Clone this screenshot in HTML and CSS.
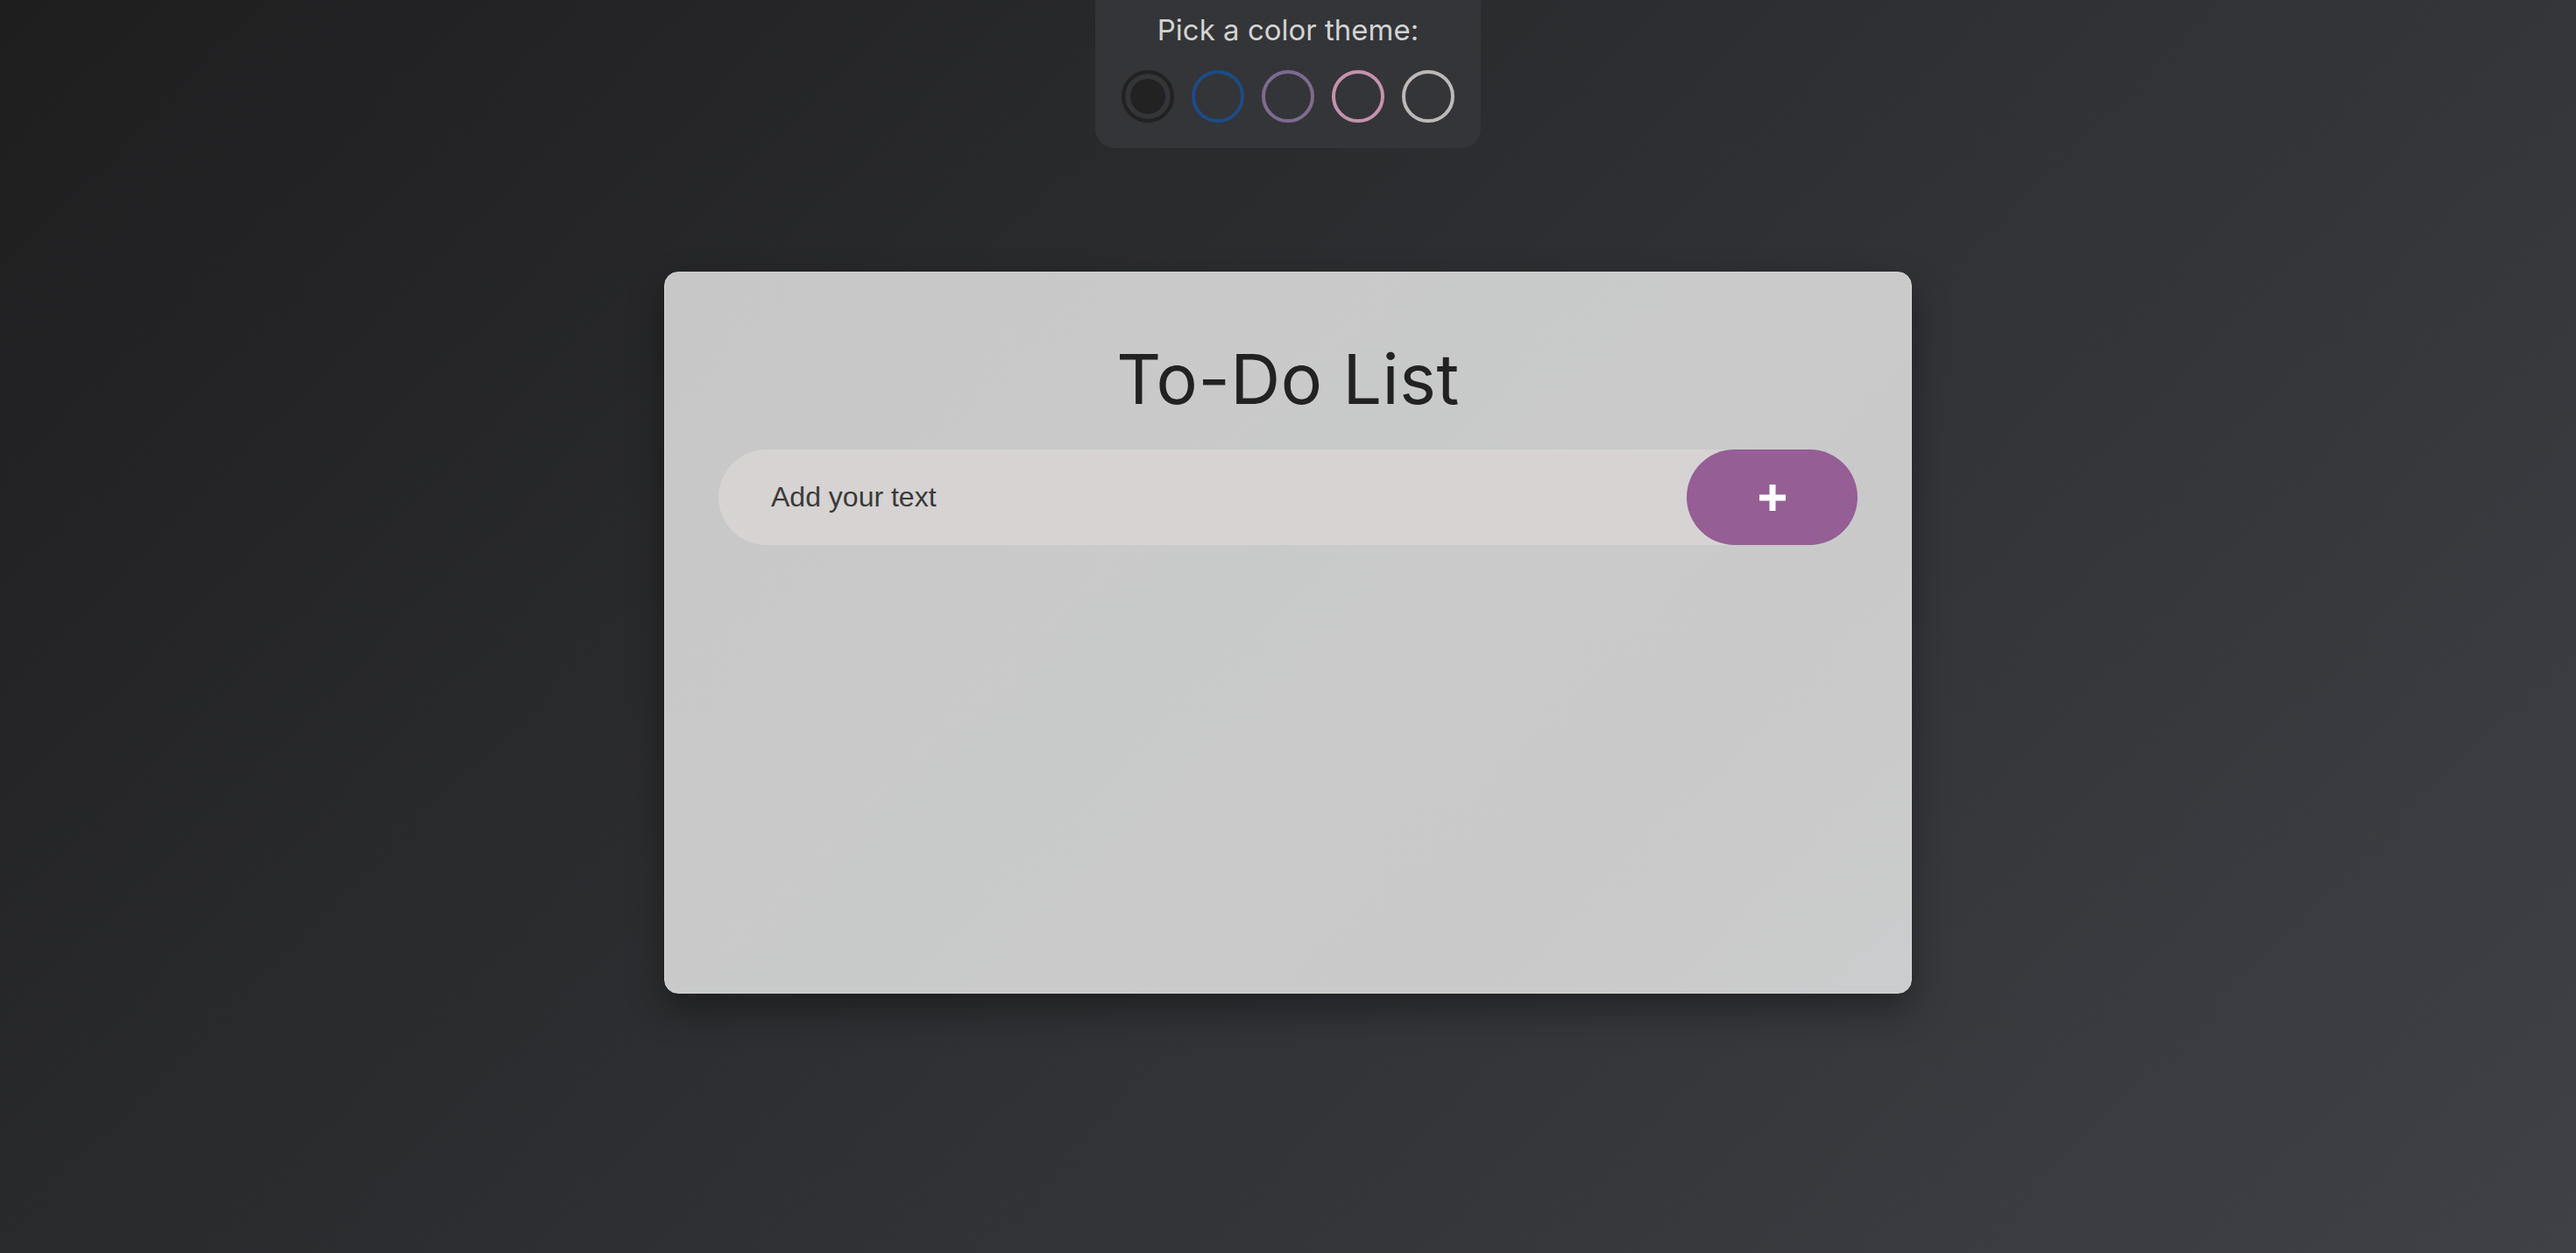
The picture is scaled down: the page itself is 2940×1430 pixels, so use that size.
FILE: index.html
```html
<!DOCTYPE html>
<html lang="en">
<head>
<meta charset="utf-8">
<title>To-Do List</title>
<link rel="stylesheet" href="styles.css">
</head>
<body>
  <div class="theme-panel">
    <p class="theme-label">Pick a color theme:</p>
    <div class="swatches">
      <button class="swatch swatch-dark active" aria-label="Dark theme"></button>
      <button class="swatch swatch-blue" aria-label="Blue theme"></button>
      <button class="swatch swatch-purple" aria-label="Purple theme"></button>
      <button class="swatch swatch-pink" aria-label="Pink theme"></button>
      <button class="swatch swatch-gray" aria-label="Gray theme"></button>
    </div>
  </div>

  <main class="card">
    <h1 class="title">To-Do List</h1>
    <form class="add-row">
      <input class="add-input" type="text" placeholder="Add your text">
      <button class="add-btn" type="button" aria-label="Add">
        <svg width="30" height="30" viewBox="0 0 30 30"><rect x="11.5" y="0" width="7" height="30" fill="#fff"/><rect x="0" y="11.5" width="30" height="7" fill="#fff"/></svg>
      </button>
    </form>
  </main>
</body>
</html>
```

FILE: styles.css
```css
* { box-sizing: border-box; }

html, body { margin: 0; padding: 0; }

body {
  min-height: 100vh;
  background: linear-gradient(135deg, #1e1e1f 0%, #2d2e31 45%, #404147 100%);
  font-family: "Inter", "Lato", sans-serif;
  display: flex;
  flex-direction: column;
  align-items: center;
}

.theme-panel {
  width: 440px;
  height: 169px;
  background: #343538;
  border-radius: 0 0 22px 22px;
  padding: 10px 30px 0;
  display: flex;
  flex-direction: column;
  align-items: center;
}

.theme-label {
  margin: 0;
  font-family: "Inter", "Lato", sans-serif;
  font-size: 33px;
  line-height: 48px;
  color: #d3d3d3;
  font-weight: 400;
}

.swatches {
  margin-top: 22px;
  display: flex;
  gap: 20px;
}

.swatch {
  width: 60px;
  height: 60px;
  border-radius: 50%;
  background: transparent;
  border: 4px solid #bdb8b8;
  padding: 0;
  cursor: pointer;
}

.swatch-dark { border-color: #222222; }
.swatch-dark.active { background: #222222; box-shadow: inset 0 0 0 6px #343538; }
.swatch-blue { border-color: #1c4b88; }
.swatch-purple { border-color: #7e6b90; }
.swatch-pink { border-color: #c592ad; }
.swatch-gray { border-color: #bdb9b9; }

.card {
  margin-top: 141px;
  width: 1424px;
  height: 824px;
  border-radius: 16px;
  background: linear-gradient(135deg, #c7c7c7 0%, #c9c9c9 30%, #c8cac9 45%, #cacaca 60%, #c9c9c9 75%, #cbcccd 100%);
  border: 1px solid #d2d2d2;
  box-shadow: 0 18px 40px rgba(0, 0, 0, 0.35);
  padding: 71px 61px 0;
  display: flex;
  flex-direction: column;
}

.title {
  margin: 0;
  text-align: center;
  font-family: "Inter", "Lato", sans-serif;
  font-weight: 400;
  font-size: 79px;
  line-height: 100px;
  color: #222222;
  letter-spacing: 0.5px;
}

.add-row {
  margin: 31px 0 0;
  display: flex;
  align-items: stretch;
  height: 109px;
}

.add-input {
  flex: 1;
  min-width: 0;
  border: none;
  outline: none;
  background: #d6d3d2;
  border-radius: 55px 0 0 55px;
  padding: 0 0 0 60px;
  font-family: "Liberation Sans", Arial, sans-serif;
  font-size: 32px;
  color: #3a3a3a;
}

.add-input::placeholder { color: #3a3a3a; opacity: 1; }

.add-btn {
  width: 195px;
  margin-left: -55px;
  border: none;
  border-radius: 55px;
  background: #955e95;
  display: flex;
  align-items: center;
  justify-content: center;
  cursor: pointer;
  padding: 0;
}
```
